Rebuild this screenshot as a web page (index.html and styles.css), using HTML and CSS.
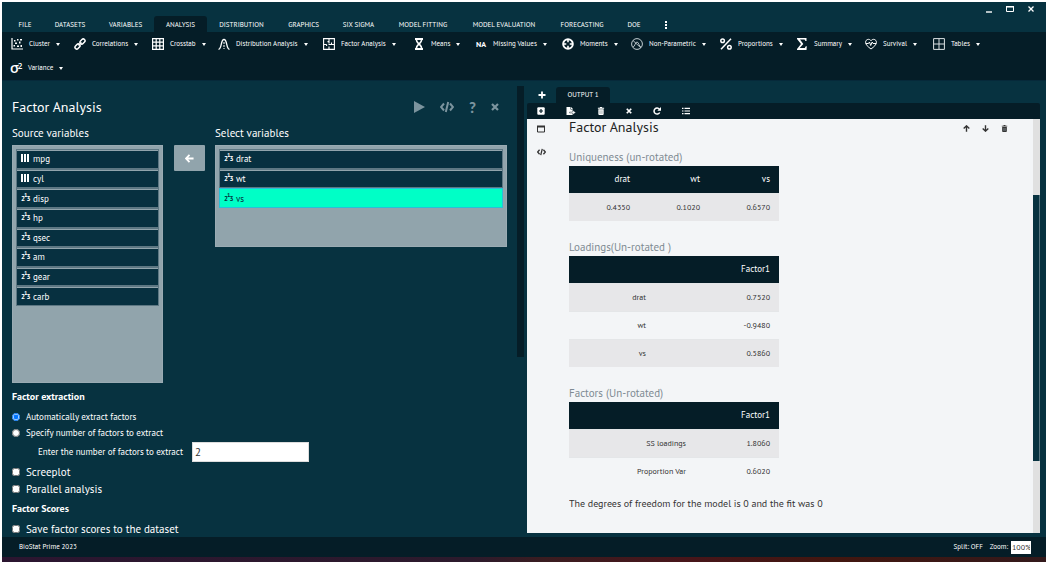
FILE: index.html
```html
<!DOCTYPE html>
<html lang="en">
<head>
<meta charset="utf-8">
<title>BioStat Prime 2023</title>
<link rel="stylesheet" href="styles.css">
</head>
<body>
<svg class="defs" aria-hidden="true">
  <symbol id="i-code" viewBox="0 0 14 12"><path d="M4 2.500 1 6l3 3.500M10 2.500l3 3.500-3 3.500M8.200 1 5.800 11" fill="none" stroke="currentColor" stroke-width="2"/></symbol>
  <symbol id="i-x" viewBox="0 0 8 8"><path d="m1 1 6 6M7 1 1 7" fill="none" stroke="currentColor" stroke-width="2.200"/></symbol>
  <symbol id="i-trash" viewBox="0 0 8 9"><path d="M.5.900h2L3 0h2l.5.900h2V2h-7zM1 2.600h6V8q0 1-1 1H2Q1 9 1 8z" fill="currentColor"/><path d="M2.700 3.800v4M4 3.800v4M5.300 3.800v4" stroke="#7f8b90" stroke-width=".6"/></symbol>
  <symbol id="i-arrow" viewBox="0 0 10 10"><path d="M9.500 5H1.500M5 1 1.200 5 5 9" fill="none" stroke="currentColor" stroke-width="2"/></symbol>
</svg>
<div class="app">
  <header class="top">
    <div class="window-controls">
      <button aria-label="Minimize"><svg viewBox="0 0 8 8"><path d="M1 7h6" stroke="#fff" stroke-width="1.400"/></svg></button>
      <button aria-label="Maximize"><svg viewBox="0 0 8 8"><path d="M.5 1.500h7v5h-7z" fill="none" stroke="#fff"/><path d="M0 1.800h8" stroke="#fff" stroke-width="1.500"/></svg></button>
      <button aria-label="Close"><svg viewBox="0 0 8 8"><path d="m1.500 1.500 5 5m0-5-5 5" stroke="#fff" stroke-width="1.300"/></svg></button>
    </div>
    <nav class="tabs">
      <button>FILE</button><button>DATASETS</button><button>VARIABLES</button><button class="active">ANALYSIS</button><button>DISTRIBUTION</button><button>GRAPHICS</button><button>SIX SIGMA</button><button>MODEL FITTING</button><button>MODEL EVALUATION</button><button>FORECASTING</button><button>DOE</button><button class="more" aria-label="More"><svg viewBox="0 0 3 8"><path d="M.5 0h2v2h-2zM.5 3h2v2h-2zM.5 6h2v2h-2z" fill="#fff"/></svg></button>
    </nav>
  </header>
  <nav class="ribbon">
    <button><svg viewBox="0 0 12 12"><path d="M1 0v11h11" fill="none" stroke="#fff" stroke-width="1.200"/><path d="M3 2h1.500v1.500H3zM6 1h1.500v1.500H6zM9 1h2v1.500H9zM4 4.500h2V6H4zM8 3.500h1.500v2H8zM2.500 7H4v1.500H2.500zM6 7.500h2V9H6zM9.500 7H11v2H9.500z" fill="#fff"/></svg>Cluster</button>
    <button><svg viewBox="0 0 12 12"><g fill="none" stroke="#fff" stroke-width="1.500"><rect x="-2.800" y="-1.800" width="5.600" height="3.600" rx="1.800" transform="translate(8.500 3.500) rotate(-45)"/><rect x="-2.800" y="-1.800" width="5.600" height="3.600" rx="1.800" transform="translate(3.500 8.500) rotate(-45)"/><path d="m4.500 7.500 3-3"/></g></svg>Correlations</button>
    <button><svg viewBox="0 0 12 12"><path d="M.6.600h10.800v10.800H.6zM4.200.600v10.800M7.800.600v10.800M.6 4.200h10.800M.6 7.800h10.800" fill="none" stroke="#fff" stroke-width="1.200"/></svg>Crosstab</button>
    <button><svg viewBox="0 0 12 12"><path d="M.5 11.300C4 11 2.500 1.500 6 1.500s2 9.500 5.500 9.800" fill="none" stroke="#fff" stroke-width="1.300"/><path d="M6 4v7" stroke="#fff" stroke-dasharray="2 1"/></svg>Distribution Analysis</button>
    <button><svg viewBox="0 0 12 12"><path d="M.6.600h10.800v10.800H.6zM6 .6v3H4.500M6 3.600v2M6 8.500v3M.6 6.500h3M5.500 6.500h3M8.500 4.500v2h3M3.600 6.500V8" fill="none" stroke="#fff" stroke-width="1.100"/></svg>Factor Analysis</button>
    <button><svg viewBox="0 0 12 12"><path d="M2 1h8M2 11h8" stroke="#fff" stroke-width="1.800"/><path d="M3.300 1.500C3.500 4 5 5 6 6c1 1 2.500 2 2.700 4.500M8.700 1.500C8.500 4 7 5 6 6c-1 1-2.500 2-2.700 4.500" fill="none" stroke="#fff" stroke-width="1.600"/></svg>Means</button>
    <button><b class="glyph">NA</b>Missing Values</button>
    <button><svg viewBox="0 0 12 12"><circle cx="6" cy="6" r="4.800" fill="none" stroke="#fff" stroke-width="2"/><path d="M6 1v3.300M6 7.700V11M1 6h3.300M7.700 6H11" stroke="#fff" stroke-width="1.600"/></svg>Moments</button>
    <button><svg viewBox="0 0 12 12"><g fill="none" stroke="#c4ced2"><circle cx="6" cy="6" r="5.400"/><path d="m2 2.500 8 7.500M2 9c2 0 2-5 4-5s2 5 4 5" stroke-width=".9"/></g></svg>Non-Parametric</button>
    <button><svg viewBox="0 0 12 12"><g fill="none" stroke="#fff" stroke-width="1.500"><circle cx="2.600" cy="2.800" r="1.800"/><circle cx="9.400" cy="9.200" r="1.800"/><path d="M11 .8 1 11.200"/></g></svg>Proportions</button>
    <button><svg viewBox="0 0 12 12"><path d="M1 0h9.500v3h-1L8.500 1.600H4L7.300 6 3.700 10h5.100l1-1.700h1L10.500 12H1v-1l4-5-4-5z" fill="#fff"/></svg>Summary</button>
    <button><svg viewBox="0 0 12 12"><path d="M6 11C3 8.800.6 6.800.6 4.200.6 1.200 4.500.3 6 2.700 7.500.3 11.400 1.200 11.400 4.200 11.400 6.800 9 8.800 6 11zM.8 5.500h2.700L4.500 4l1.200 3.500L7.200 4l.8 1.500h3.200" fill="none" stroke="#fff"/></svg>Survival</button>
    <button><svg viewBox="0 0 12 12"><path d="M.6.600h10.800v10.800H.6zM6 .6v10.800M.6 6h10.800" fill="none" stroke="#dce2e4"/></svg>Tables</button>
    <button class="variance"><b class="glyph sigma">σ<sup>2</sup></b>Variance</button>
  </nav>
  <main class="main">
    <section class="dialog">
      <div class="dialog-head">
        <h1>Factor Analysis</h1>
        <div class="dialog-actions">
          <button aria-label="Run"><svg class="run" viewBox="0 0 11 12"><path d="M0 0v12l11-6z" fill="currentColor"/></svg></button>
          <button aria-label="Code"><svg class="code"><use href="#i-code"/></svg></button>
          <button aria-label="Help" class="help">?</button>
          <button aria-label="Close"><svg class="close"><use href="#i-x"/></svg></button>
        </div>
      </div>
      <div class="pickers">
        <div class="picker">
          <h2>Source variables</h2>
          <div class="list source"><ul>
            <li><i class="bars"></i>mpg</li><li><i class="bars"></i>cyl</li>
            <li><i class="num">2<sup>1</sup>3</i>disp</li><li><i class="num">2<sup>1</sup>3</i>hp</li><li><i class="num">2<sup>1</sup>3</i>qsec</li><li><i class="num">2<sup>1</sup>3</i>am</li><li><i class="num">2<sup>1</sup>3</i>gear</li><li><i class="num">2<sup>1</sup>3</i>carb</li>
          </ul></div>
        </div>
        <button class="move" aria-label="Move back"><svg><use href="#i-arrow"/></svg></button>
        <div class="picker target-picker">
          <h2>Select variables</h2>
          <div class="list target"><ul>
            <li><i class="num">2<sup>1</sup>3</i>drat</li><li><i class="num">2<sup>1</sup>3</i>wt</li><li class="selected"><i class="num">2<sup>1</sup>3</i>vs</li>
          </ul></div>
        </div>
      </div>
      <form class="options">
        <h3>Factor extraction</h3>
        <label class="small"><input type="radio" name="mode" checked>Automatically extract factors</label>
        <label class="small"><input type="radio" name="mode">Specify number of factors to extract</label>
        <label class="count">Enter the number of factors to extract<input type="text" value="2"></label>
        <label class="check"><input type="checkbox">Screeplot</label>
        <label class="check"><input type="checkbox">Parallel analysis</label>
        <h3>Factor Scores</h3>
        <label class="check"><input type="checkbox">Save factor scores to the dataset</label>
      </form>
    </section>
    <div class="gutter"></div>
    <section class="output">
      <div class="output-tabs">
        <button class="add" aria-label="Add output"><svg viewBox="0 0 8 8"><path d="M4 .5v7M.5 4h7" stroke="#fff" stroke-width="1.800"/></svg></button>
        <button class="output-tab">OUTPUT 1</button>
      </div>
      <div class="output-tools">
        <button aria-label="New"><svg viewBox="0 0 8 8"><rect x=".3" y=".3" width="7.400" height="7.400" rx="1" fill="#fff"/><path d="M4 2v4M2 4h4" stroke="#051d27" stroke-width="1.200"/></svg></button>
        <button aria-label="Export"><svg class="wide" viewBox="0 0 10 8"><path d="M.5 0h4v2.500H7V8H.500zM5 0l2 2H5z" fill="#fff"/><path d="M3.500 5h3V3.300L9.800 5.500 6.500 7.700V6h-3z" fill="#fff" stroke="#051d27" stroke-width=".4"/></svg></button>
        <button aria-label="Delete"><svg><use href="#i-trash"/></svg></button>
        <button aria-label="Close"><svg class="tiny"><use href="#i-x"/></svg></button>
        <button aria-label="Refresh"><svg viewBox="0 0 8 8"><path d="M6.400 2.200A3 3 0 1 0 6.700 5.500" fill="none" stroke="#fff" stroke-width="1.500"/><path d="M8 0v3.800H4.300z" fill="#fff"/></svg></button>
        <button aria-label="List"><svg viewBox="0 0 8 8"><path d="M0 1.300h1.500M0 4h1.500M0 6.700h1.500M2.500 1.300H8M2.500 4H8M2.500 6.700H8" stroke="#fff" stroke-width="1.200"/></svg></button>
      </div>
      <div class="report">
        <div class="side">
          <button aria-label="Window"><svg viewBox="0 0 8 8"><path d="M.5 1v6h7V1" fill="none" stroke="#333"/><path d="M0 1.500h8" stroke="#333" stroke-width="2"/></svg></button>
          <button aria-label="Code"><svg class="side-code"><use href="#i-code"/></svg></button>
        </div>
        <article class="results">
          <h2>Factor Analysis</h2>
          <table class="even">
            <caption>Uniqueness (un-rotated)</caption>
            <thead><tr><th>drat</th><th>wt</th><th>vs</th></tr></thead>
            <tbody><tr><td>0.4350</td><td>0.1020</td><td>0.6570</td></tr></tbody>
          </table>
          <table class="loadings">
            <caption>Loadings(Un-rotated )</caption>
            <thead><tr><th></th><th>Factor1</th></tr></thead>
            <tbody><tr><td>drat</td><td>0.7520</td></tr><tr><td>wt</td><td>-0.9480</td></tr><tr><td>vs</td><td>0.5860</td></tr></tbody>
          </table>
          <table class="factors">
            <caption>Factors (Un-rotated)</caption>
            <thead><tr><th></th><th>Factor1</th></tr></thead>
            <tbody><tr><td>SS loadings</td><td>1.8060</td></tr><tr><td>Proportion Var</td><td>0.6020</td></tr></tbody>
          </table>
          <p>The degrees of freedom for the model is 0 and the fit was 0</p>
        </article>
        <div class="report-actions">
          <button aria-label="Move up"><svg class="up"><use href="#i-arrow"/></svg></button>
          <button aria-label="Move down"><svg class="down"><use href="#i-arrow"/></svg></button>
          <button aria-label="Delete"><svg class="bin"><use href="#i-trash"/></svg></button>
        </div>
        <div class="scrollbar"><span></span></div>
      </div>
    </section>
  </main>
  <footer class="status">
    <span>BioStat Prime 2023</span>
    <span class="split">Split: OFF</span>
    <label>Zoom:<input type="text" value="100%"></label>
  </footer>
  <div class="taskbar"></div>
</div>
</body>
</html>
```

FILE: styles.css
```css
* { box-sizing: border-box; }
body { margin: 0; padding: 2px; background: #fff; color: #fff; font: 9px/12px "PT Sans", Lato, "Open Sans", sans-serif; }
h1, h2, h3, p, ul { margin: 0; padding: 0; font-weight: 400; }
button { margin: 0; padding: 0; border: 0; background: none; color: inherit; font: inherit; display: flex; align-items: center; }
svg { display: block; flex: none; width: 8px; height: 8px; }
.defs { position: absolute; width: 0; height: 0; }
.app { height: calc(100vh - 4px); min-height: 560px; display: flex; flex-direction: column; background: #073240; }

.top { height: 30px; flex: none; }
.window-controls { height: 14px; display: flex; justify-content: flex-end; align-items: center; gap: 13px; padding-right: 11px; }
.tabs { height: 16px; padding-left: 5px; display: grid; font-size: 7px;
  grid-template-columns: 36fr 54fr 57fr 53fr 69fr 55fr 55fr 74fr 88fr 68fr 36fr 394fr; }
.tabs button { justify-content: center; white-space: nowrap; min-width: 0; padding-top: 1px; }
.tabs .active { background: #051d27; border-radius: 3px 3px 0 0; }
.tabs .more { justify-content: flex-start; padding-left: 10px; }

.ribbon { flex: none; padding-left: 9px; background: #051d27; display: grid; grid-auto-rows: 24px; font-size: 7px;
  grid-template-columns: 63fr 78fr 66fr 105fr 90fr 62fr 87fr 69fr 89fr 76fr 69fr 68fr 113fr; }
.ribbon button { min-width: 0; gap: 6px; white-space: nowrap; }
.ribbon svg { width: 12px; height: 12px; }
.ribbon button::after { content: ""; border: 2px solid transparent; border-top: 3px solid #fff; border-bottom: 0; }
.ribbon .glyph { width: 12px; font-size: 8px; font-weight: 900; }
.ribbon .sigma { font-size: 14px; font-family: "Open Sans", sans-serif; font-weight: 600; white-space: nowrap; }
.sigma sup { font-size: 8px; line-height: 0; vertical-align: 4px; margin-left: -1px; }
.ribbon .variance { margin-left: -1px; }

.main { flex: 1; min-height: 0; display: grid; grid-template-columns: 515fr 10px 513fr; grid-template-rows: minmax(0, 1fr); padding-right: 6px; border-top: 1px solid #06293a; }
.dialog { min-width: 0; overflow: hidden; padding: 17px 10px 0; }
.dialog-head { display: flex; justify-content: space-between; align-items: center; height: 18px; padding-right: 8px; }
.dialog-head h1 { font-size: 14px; line-height: 18px; }
.dialog-actions { display: flex; align-items: center; gap: 15px; color: #7c949e; }
.dialog-actions .run { width: 11px; height: 12px; }
.dialog-actions .code { width: 14px; height: 12px; }
.dialog-actions .help { font: 900 15px/18px Lato, sans-serif; }
.pickers { display: flex; align-items: flex-start; margin-top: 9px; }
.picker { flex: 151 1 0; }
.target-picker { flex: 292 1 0; }
.picker h2 { font-size: 11px; line-height: 16px; margin-bottom: 4px; }
.list { background: #91a4ac; border: 1px solid #9aabb3; padding: 3px 3px 0; }
.source { height: 238px; }
.target { height: 102px; }
.list ul { list-style: none; display: grid; grid-auto-rows: 1fr; }
.source ul { height: 157px; }
.target ul { height: 59px; }
.list li { display: flex; align-items: center; gap: 4px; padding: 1px 4px 0; border: 1px solid #5d7783; box-shadow: 0 1px #91a4ac inset; background: #073040; min-height: 0; }
.list .selected { background: #00ffc6; color: #073240; border-color: #2abfd8; box-shadow: none; }
.bars { width: 8px; height: 8px; margin-bottom: 2px; background: repeating-linear-gradient(90deg, #fff 0 2px, transparent 2px 3px); }
.num { width: 8px; font: 600 7px/10px "PT Sans", Lato, sans-serif; display: flex; }
.num sup { font-size: 6px; line-height: 5px; margin: -1px -1px 0; }
.move { width: 31px; height: 26px; margin: 20px 10px 0 11px; background: #91a4ac; justify-content: center; border-radius: 1px; }
.move svg { width: 9px; height: 9px; }

.options { margin-top: 6px; }
.options h3 { font-size: 10px; line-height: 16px; font-weight: 700; }
.options label { display: flex; align-items: center; }
.options input[type=radio], .options input[type=checkbox] { width: 8px; height: 8px; margin: 0 6px 0 0; flex: none; }
.options .small { height: 16px; }
.options h3 + .small { margin-top: 4px; }
.options .count { height: 22px; padding-left: 26px; gap: 9px; }
.count input { width: 117px; height: 20px; padding: 0 2px; border: 1px solid #ddd; border-radius: 0; background: #fff; color: #333; font: 11px/16px "PT Sans", Lato, sans-serif; }
.options .check { height: 17px; font-size: 11px; }
.options .check + h3 { margin-top: 4px; }
.options h3 + .check { margin-top: 3px; }

.gutter { height: 271px; margin: 5px 3px 0 0; background: #051d27; }
.output { min-width: 0; display: flex; flex-direction: column; padding: 6px 0 4px; }
.output-tabs { height: 16px; flex: none; display: flex; font-size: 7px; }
.output-tabs .add { width: 29px; justify-content: center; }
.output-tab { width: 54px; justify-content: center; background: #051d27; border-radius: 3px 3px 0 0; }
.output-tools { height: 16px; flex: none; display: flex; padding-left: 10px; gap: 21px; background: #051d27; border-radius: 2px 2px 0 0; }
.output-tools .wide { width: 10px; }
.output-tools .tiny { width: 6px; height: 6px; }
.report { flex: 1; min-height: 0; display: flex; background: #f3f5f7; color: #333; }
.side { width: 42px; flex: none; padding: 6px 0 0 10px; display: flex; flex-direction: column; gap: 15px; }
.side-code { width: 9px; height: 8px; }
.results { flex: 1; min-width: 0; overflow: hidden; }
.results h2 { font-size: 14px; line-height: 16px; color: #222; -webkit-text-stroke: 0; }
table { table-layout: fixed; width: 210px; border-collapse: collapse; font-size: 8px; margin-top: 13px; }
table + table { margin-top: 17px; }
caption { text-align: left; font-size: 11px; line-height: 18px; color: #7f8b93; }
th, td { height: 28px; padding: 0 9px; text-align: right; }
th { height: 27px; background: #051d27; color: #fff; font-size: 9px; font-weight: 400; }
tbody tr { border-top: 1px solid #e4e6e8; }
tbody tr:nth-child(odd) { background: #e7e7e9; }
.loadings th:first-child { width: 86px; }
.factors th:first-child { width: 126px; }
.results p { margin-top: 11px; font-size: 10px; line-height: 16px; }
.report-actions { display: flex; align-items: center; gap: 12px; height: 18px; margin-right: 25px; }
.report-actions svg { width: 7px; height: 7px; }
.report-actions .up { transform: rotate(90deg); }
.report-actions .down { transform: rotate(-90deg); }
.scrollbar { width: 7px; flex: none; background: #e0e0e0; display: grid; grid-template-rows: 76fr 266fr 72fr; }
.scrollbar span { grid-row: 2; background: #073240; border-right: 1px solid #587580; }

.status { height: 20px; flex: none; display: flex; align-items: center; padding: 0 15px 0 17px; background: #051d27; font-size: 7px; }
.split { margin-left: auto; margin-right: 7px; }
.status label { display: flex; align-items: center; gap: 3px; }
.status input { width: 20px; height: 13px; border: 0; padding: 0 1px; background: #fff; color: #333; font: 8px/12px "PT Sans", Lato, sans-serif; }
.taskbar { height: 5px; flex: none; background: linear-gradient(90deg, #2b1530, #2c1a2c 45%, #3a1c20 52%, #47151a 65%, #42160f 80%, #33191b); }
```
